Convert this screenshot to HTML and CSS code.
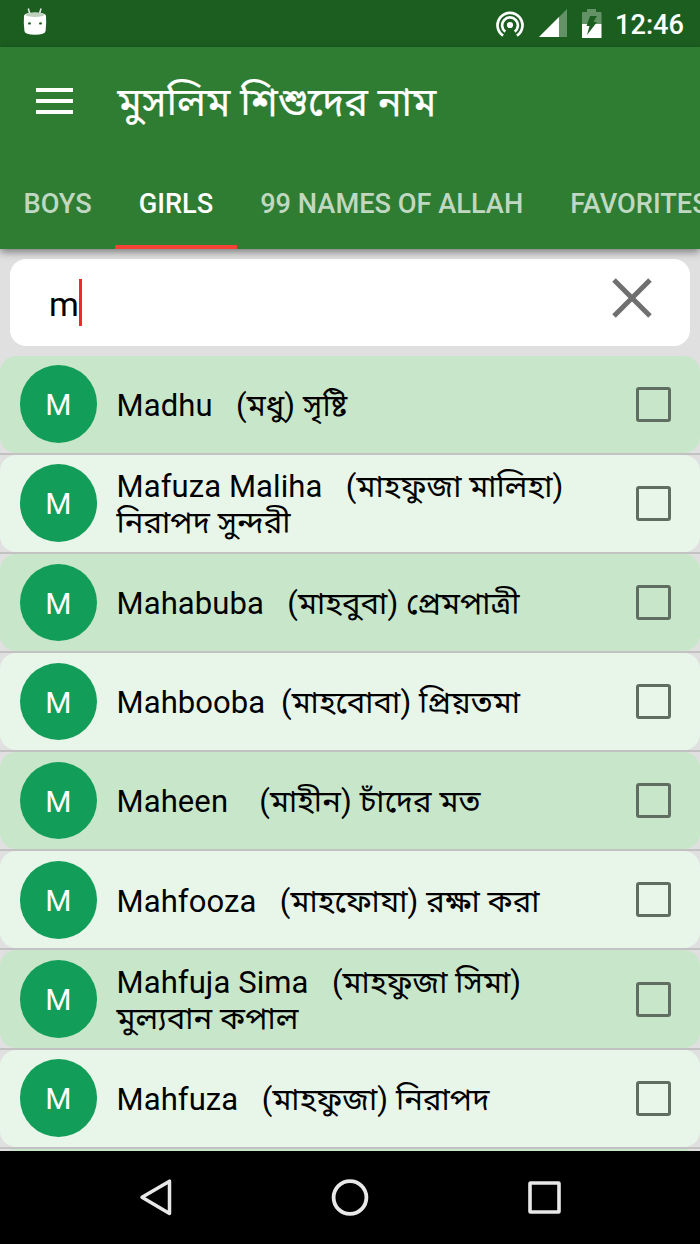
FILE: index.html
```
<!DOCTYPE html>
<html lang="bn">
<head>
<meta charset="utf-8">
<title>মুসলিম শিশুদের নাম</title>
<link rel="stylesheet" href="styles.css">
</head>
<body>
<div class="statusbar">
  <svg class="debug-icon" width="24" height="28" viewBox="0 0 24 28">
    <path d="M5.3 .5 6.800 6M18 .5 16.500 6" stroke="#dfe9df" stroke-width="1.600" fill="none"/>
    <path d="M1 8Q1 4.500 12 4.500T23 8Q23.600 15 22.600 23Q22 26.800 12 26.800T1.400 23Q.4 15 1 8z" fill="#fff"/>
    <ellipse cx="12" cy="6.800" rx="9.500" ry="2.100" fill="#bcd0bd"/>
    <ellipse cx="6.500" cy="15.400" rx="1.400" ry="1.200" fill="#1b5e20"/>
    <ellipse cx="17.500" cy="15.400" rx="1.400" ry="1.200" fill="#1b5e20"/>
  </svg>
  <div class="status-right">
    <svg width="30" height="28" viewBox="0 0 30 28" fill="none" stroke="#fff" stroke-width="2.700">
      <path d="M8.100 26.700A12.500 12.500 0 1 1 21.900 26.700"/>
      <path d="M10.300 22.700A7.900 7.900 0 1 1 19.700 22.700"/>
      <circle cx="15" cy="16" r="3.100" fill="#fff" stroke="none"/>
    </svg>
    <svg class="signal" width="28" height="28" viewBox="0 0 28 28">
      <path d="M0 28 28 0V28z" fill="#649267"/>
      <path d="M0 28 20 8V28z" fill="#fff"/>
    </svg>
    <svg class="battery" width="20" height="29" viewBox="0 0 20 29">
      <path d="M0 4Q0 3 1 3H5V0H14V3H18.500Q19.500 3 19.500 4V15H0z" fill="#649267"/>
      <path d="M0 15H19.500V29H0z" fill="#fff"/>
      <path d="M8 7H15L11.500 13H15L5 26L7.500 17H4.500z" fill="#1b5e20"/>
    </svg>
    <span class="clock">12:46</span>
  </div>
</div>
<header class="appbar">
  <div class="toolbar">
    <div class="menu"><i></i><i></i><i></i></div>
    <h1 class="title">মুসলিম শিশুদের নাম</h1>
  </div>
  <nav class="tabs">
    <span class="tab">BOYS</span>
    <span class="tab active">GIRLS</span>
    <span class="tab">99 NAMES OF ALLAH</span>
    <span class="tab">FAVORITES</span>
  </nav>
</header>
<main class="content">
  <div class="search">
    <span class="query">m</span><i class="caret"></i>
    <svg class="clear" width="40" height="40" viewBox="0 0 40 40"><path d="M2 2 38 38M38 2 2 38" stroke="#707070" stroke-width="5"/></svg>
  </div>
  <ul class="list">
    <li class="row"><div class="card"><span class="avatar">M</span><span class="name">Madhu   (মধু) সৃষ্টি</span><i class="check"></i></div></li>
    <li class="row"><div class="card"><span class="avatar">M</span><span class="name">Mafuza Maliha   (মাহফুজা মালিহা) নিরাপদ সুন্দরী</span><i class="check"></i></div></li>
    <li class="row"><div class="card"><span class="avatar">M</span><span class="name">Mahabuba   (মাহবুবা) প্রেমপাত্রী</span><i class="check"></i></div></li>
    <li class="row"><div class="card"><span class="avatar">M</span><span class="name">Mahbooba  (মাহবোবা) প্রিয়তমা</span><i class="check"></i></div></li>
    <li class="row"><div class="card"><span class="avatar">M</span><span class="name">Maheen    (মাহীন) চাঁদের মত</span><i class="check"></i></div></li>
    <li class="row"><div class="card"><span class="avatar">M</span><span class="name">Mahfooza   (মাহফোযা) রক্ষা করা</span><i class="check"></i></div></li>
    <li class="row"><div class="card"><span class="avatar">M</span><span class="name">Mahfuja Sima   (মাহফুজা সিমা) মুল্যবান কপাল</span><i class="check"></i></div></li>
    <li class="row"><div class="card"><span class="avatar">M</span><span class="name">Mahfuza   (মাহফুজা) নিরাপদ</span><i class="check"></i></div></li>
    <li class="row"><div class="card"></div></li>
  </ul>
</main>
<footer class="navbar">
  <svg width="700" height="93" viewBox="0 0 700 93" fill="none" stroke="#e8e8e8" stroke-linejoin="round">
    <path d="M169.500 30.200V62.500L142 46.300z" stroke-width="3.500"/>
    <circle cx="350" cy="46.500" r="16.400" stroke-width="3.800"/>
    <rect x="530" y="32" width="29" height="29" rx=".5" stroke-width="3.600"/>
  </svg>
</footer>
</body>
</html>
```
FILE: styles.css
```
* { box-sizing: border-box; }

body {
  margin: 0;
  width: 700px;
  height: 1244px;
  display: flex;
  flex-direction: column;
  overflow: hidden;
  background: #e0e0e0;
  font-family: Roboto, "Noto Sans Bengali", sans-serif;
}

.statusbar {
  flex: none;
  height: 47px;
  padding: 8px 16px 0 23px;
  display: flex;
  justify-content: space-between;
  background: #1b5e20;
}

.status-right { display: flex; padding-top: 1px; }
.signal { margin-left: 14px; }
.battery { margin-left: 15px; }
.clock {
  margin: -1px 0 0 13.500px;
  color: #fff;
  font-size: 27.200px;
  font-weight: 500;
  line-height: 34px;
}

.appbar {
  flex: none;
  height: 202px;
  background: #2e7d32;
  box-shadow: 0 3px 8px rgba(0, 0, 0, .45);
  z-index: 1;
}

.toolbar {
  height: 109px;
  padding-left: 36px;
  display: flex;
  align-items: center;
}

.menu {
  width: 37px;
  height: 26px;
  margin-bottom: 1px;
  display: flex;
  flex-direction: column;
  justify-content: space-between;
}
.menu i { height: 4px; background: #fff; }

.title {
  margin: 3px 0 0 44.500px;
  color: #fff;
  font-size: 39.700px;
  font-weight: 400;
  -webkit-text-stroke: .2px #fff;
  line-height: 54px;
  white-space: nowrap;
}

.tabs { display: flex; height: 93px; }
.tab {
  flex: none;
  padding: 0 23.500px;
  color: #c0d8c1;
  font-size: 27.200px;
  font-weight: 500;
  line-height: 97px;
  white-space: nowrap;
}
.tab.active { color: #fff; border-bottom: 4px solid #f44336; }

.content {
  flex: 1;
  min-height: 0;
  padding-top: 9.500px;
  overflow: hidden;
}

.search {
  height: 87.500px;
  margin: 0 10px 9.500px;
  padding: 0 38px 0 39px;
  display: flex;
  align-items: center;
  background: #fff;
  border-radius: 16px;
}
.query { font-size: 34px; line-height: 48px; padding-top: 4px; }
.caret { width: 3px; height: 47px; background: #f42a20; }
.clear { margin: 0 0 9px auto; }

.list { margin: 0; padding: 0; list-style: none; }
.row { height: 99.170px; border-bottom: 2px solid #c2c2c2; }

.card {
  height: 97.170px;
  padding: 0 29px 0 19.500px;
  display: flex;
  align-items: center;
  background: #c8e6c9;
  border-radius: 16px;
}
.row:nth-child(even) .card { background: #e8f5e9; }

.avatar {
  flex: none;
  width: 77.500px;
  height: 77.500px;
  padding-top: 1px;
  border-radius: 50%;
  background: #129e59;
  color: #fff;
  font-size: 30px;
  line-height: 78px;
  text-align: center;
}

.name {
  width: 492px;
  margin-left: 19.500px;
  padding-top: 4px;
  color: #000;
  font-size: 31px;
  letter-spacing: .1px;
  line-height: 36.500px;
  white-space: pre-wrap;
}

.check {
  width: 35px;
  height: 35px;
  margin: 0 0 0 auto;
  border: 3px solid #5f6e60;
  border-radius: 3px;
}

.navbar { flex: none; height: 93px; background: #000; }
.navbar svg { display: block; }
```
